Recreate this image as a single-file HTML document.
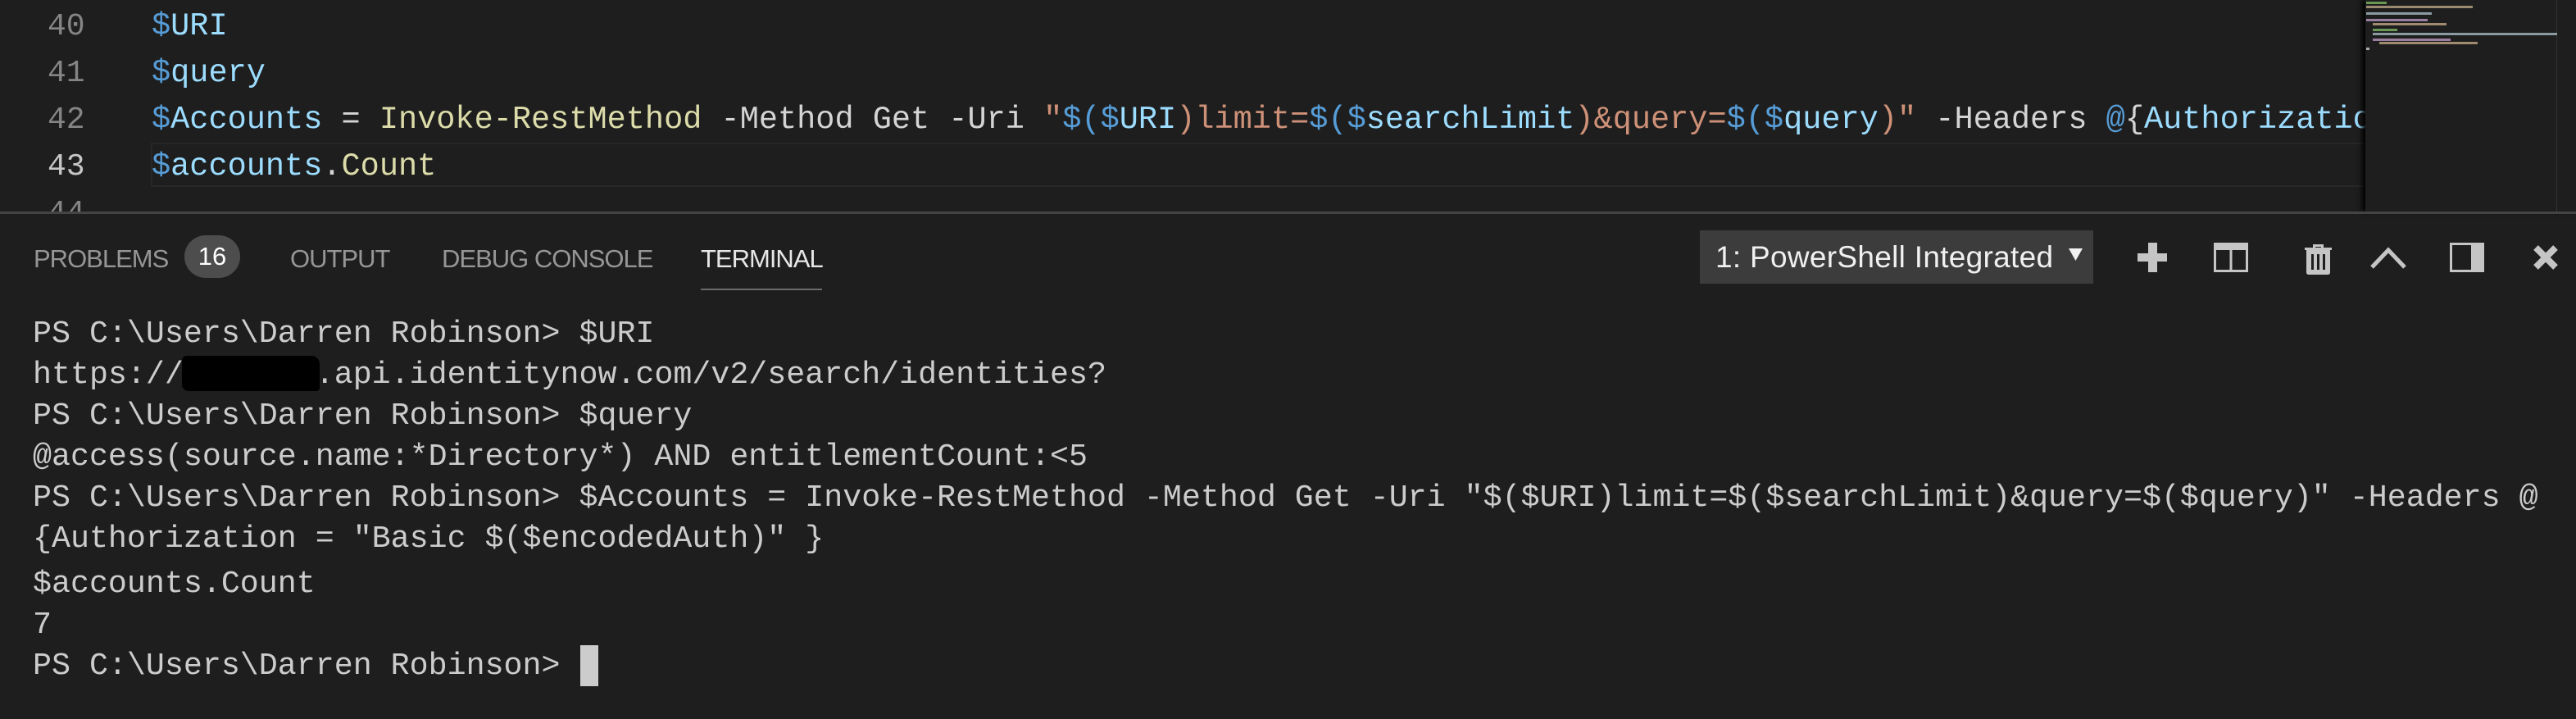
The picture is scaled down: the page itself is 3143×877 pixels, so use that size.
<!DOCTYPE html>
<html><head><meta charset="utf-8"><style>
html,body{margin:0;padding:0;background:#1e1e1e;width:3143px;height:877px;overflow:hidden;position:relative}
.m{font-family:"Liberation Mono",monospace;font-size:38px;white-space:pre;position:absolute;line-height:50px}
.ln{color:#858585;font-family:"Liberation Mono",monospace;font-size:38px;position:absolute;left:58px;line-height:57px}
.b{color:#569cd6}.v{color:#9cdcfe}.y{color:#dcdcaa}.w{color:#d4d4d4}.s{color:#ce9178}
.t{font-family:"Liberation Sans",sans-serif;font-size:31px;color:#969696;position:absolute;top:296px;line-height:40px;letter-spacing:-1px}
.term{color:#cccccc;left:40px;font-size:38.3px}
.ed{font-size:38.6px}
</style></head><body>
<!-- editor -->
<div style="position:absolute;left:0;top:0;width:2886px;height:258px;overflow:hidden">
<div style="position:absolute;left:184px;top:174px;width:2702px;height:54px;border:2px solid #282828;box-sizing:border-box"></div>
<div class="ln" style="top:4px">40</div>
<div class="ln" style="top:61px">41</div>
<div class="ln" style="top:118px">42</div>
<div class="ln" style="top:175px;color:#c6c6c6">43</div>
<div class="ln" style="top:232px">44</div>
<div class="m ed" style="left:185px;top:7px"><span class="b">$</span><span class="v">URI</span></div>
<div class="m ed" style="left:185px;top:64px"><span class="b">$</span><span class="v">query</span></div>
<div class="m ed" style="left:185px;top:121px"><span class="b">$</span><span class="v">Accounts</span><span class="w"> = </span><span class="y">Invoke-RestMethod</span><span class="w"> -Method Get -Uri </span><span class="s">"</span><span class="b">$(</span><span class="b">$</span><span class="v">URI</span><span class="s">)limit=</span><span class="b">$(</span><span class="b">$</span><span class="v">searchLimit</span><span class="s">)&amp;query=</span><span class="b">$(</span><span class="b">$</span><span class="v">query</span><span class="s">)"</span><span class="w"> -Headers </span><span class="b">@</span><span class="w">{</span><span class="v">Authorization</span></div>
<div class="m ed" style="left:185px;top:178px"><span class="b">$</span><span class="v">accounts</span><span class="w">.</span><span class="y">Count</span></div>
</div>
<!-- minimap -->
<div style="position:absolute;left:2886px;top:0;width:257px;height:258px;background:#1e1e1e;box-shadow:-4px 0 6px #000"></div>
<div style="position:absolute;left:3119px;top:0;width:1px;height:258px;background:#333"></div>
<div style="position:absolute;left:2887px;top:2px;width:25px;height:3px;background:#6a9955"></div>
<div style="position:absolute;left:2887px;top:7px;width:130px;height:3px;background:#9a8a70"></div>
<div style="position:absolute;left:2887px;top:15px;width:80px;height:3px;background:#8a9aa0"></div>
<div style="position:absolute;left:2887px;top:23px;width:75px;height:3px;background:#9a80a0"></div>
<div style="position:absolute;left:2895px;top:28px;width:90px;height:3px;background:#a08a70"></div>
<div style="position:absolute;left:2895px;top:35px;width:30px;height:3px;background:#6a9955"></div>
<div style="position:absolute;left:2895px;top:40px;width:225px;height:3px;background:#8a9aa0"></div>
<div style="position:absolute;left:2895px;top:47px;width:95px;height:3px;background:#9a80a0"></div>
<div style="position:absolute;left:2903px;top:51px;width:120px;height:3px;background:#a08a70"></div>
<div style="position:absolute;left:2887px;top:58px;width:4px;height:3px;background:#aaa"></div>
<!-- panel border -->
<div style="position:absolute;left:0;top:258px;width:3143px;height:3px;background:#444"></div>
<!-- tabs -->
<div class="t" style="left:41px">PROBLEMS</div>
<div style="position:absolute;left:225px;top:287px;width:68px;height:52px;border-radius:26px;background:#4d4d4d;color:#fff;font-family:'Liberation Sans',sans-serif;font-size:31px;line-height:52px;text-align:center">16</div>
<div class="t" style="left:354px">OUTPUT</div>
<div class="t" style="left:539px">DEBUG CONSOLE</div>
<div class="t" style="left:855px;color:#e7e7e7">TERMINAL</div>
<div style="position:absolute;left:855px;top:352px;width:148px;height:2px;background:#6b6b6b"></div>
<!-- dropdown -->
<div style="position:absolute;left:2074px;top:281px;width:480px;height:65px;background:#3c3c3c;overflow:hidden">
<div style="position:absolute;left:19px;top:0;width:412px;overflow:hidden;white-space:nowrap;font-family:'Liberation Sans',sans-serif;font-size:37px;line-height:65px;color:#f0f0f0;letter-spacing:0.3px">1: PowerShell Integrated Console</div>
<svg style="position:absolute;left:450px;top:22px" width="17" height="16"><polygon points="0,0 17,0 8.5,15" fill="#f0f0f0"/></svg>
</div>
<!-- icons -->
<svg style="position:absolute;left:2590px;top:285px" width="540" height="56">
<g fill="#c5c5c5">
<rect x="31" y="11" width="11" height="36"/><rect x="18" y="24" width="36" height="10"/>
<path d="M111 11h42v36h-42zM114 20v24h16.5v-24zM133.5 20v24h16.5v-24z" fill-rule="evenodd"/>
<path d="M222 17h33v3h-33zM232 13h13v4h-3v-1h-7v1h-3zM224 20h29v27q0 3-3 3h-23q-3 0-3-3zM230 25v19h3v-19zM237 25v19h3v-19zM244 25v19h3v-19z" fill-rule="evenodd"/>
</g>
<polyline points="304,41 324,20 344,41" fill="none" stroke="#c5c5c5" stroke-width="5"/>
<path d="M399 11h42v36h-42zM402 14v30h23v-30z" fill="#c5c5c5" fill-rule="evenodd"/>
<path d="M504 17l24 24M528 17l-24 24" stroke="#c5c5c5" stroke-width="8"/>
</svg>
<!-- terminal -->
<div class="m term" style="top:382px">PS C:\Users\Darren Robinson> $URI</div>
<div class="m term" style="top:432px">https://       .api.identitynow.com/v2/search/identities?</div>
<div style="position:absolute;left:222px;top:434px;width:168px;height:43px;background:#000;border-radius:6px 10px 4px 8px"></div>
<div class="m term" style="top:482px">PS C:\Users\Darren Robinson> $query</div>
<div class="m term" style="top:532px">@access(source.name:*Directory*) AND entitlementCount:&lt;5</div>
<div class="m term" style="top:582px">PS C:\Users\Darren Robinson> $Accounts = Invoke-RestMethod -Method Get -Uri "$($URI)limit=$($searchLimit)&amp;query=$($query)" -Headers @</div>
<div class="m term" style="top:632px">{Authorization = "Basic $($encodedAuth)" }</div>
<div class="m term" style="top:687px">$accounts.Count</div>
<div class="m term" style="top:737px">7</div>
<div class="m term" style="top:787px">PS C:\Users\Darren Robinson></div>
<div style="position:absolute;left:708px;top:787px;width:22px;height:50px;background:#cccccc"></div>
</body></html>
